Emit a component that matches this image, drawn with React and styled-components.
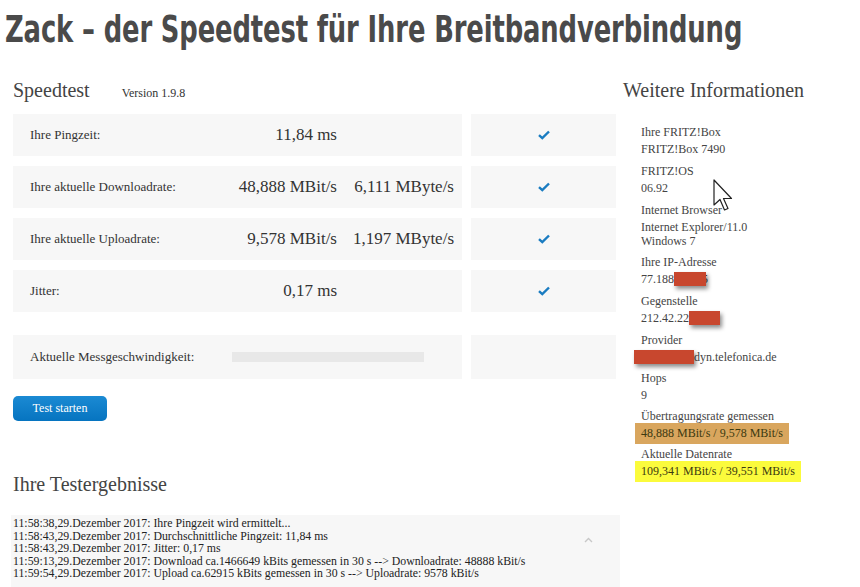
import React from 'react';
import styled, { createGlobalStyle } from 'styled-components';

const Global = createGlobalStyle`
  html, body {
    margin: 0;
    padding: 0;
    background: #ffffff;
  }
  body {
    font-family: "Liberation Serif", "Times New Roman", serif;
    color: #444;
  }
`;

const Page = styled.div`
  width: 860px;
  height: 587px;
  overflow: hidden;
  position: relative;
`;

const Title = styled.h1`
  margin: 0;
  padding: 9px 0 0 5px;
  height: 41px;
  font-family: "DejaVu Sans", "Liberation Sans", sans-serif;
  font-weight: bold;
  font-size: 38px;
  line-height: 41px;
  color: #4a4a4a;
  white-space: nowrap;
`;

const TitleText = styled.span`
  display: inline-block;
  transform: scaleX(0.68);
  transform-origin: left center;
  letter-spacing: -0.2px;
`;

const Main = styled.div`
  display: flex;
  align-items: flex-start;
  padding-left: 13px;
  margin-top: 28px;
`;

const Left = styled.div`
  width: 603px;
`;

const Right = styled.div`
  position: relative;
  margin-left: 7px;
  flex: 1;
`;

const Heading = styled.h2`
  margin: 0;
  font-weight: normal;
  font-size: 20px;
  line-height: 24px;
  color: #444;
  display: flex;
  align-items: baseline;
  gap: 32px;
`;

const Version = styled.span`
  font-size: 12px;
  color: #333;
`;

const Grid = styled.div`
  display: grid;
  grid-template-columns: 449px 145px;
  column-gap: 9px;
  row-gap: 10px;
  margin-top: 9px;
`;

const Cell = styled.div`
  background: #f7f7f7;
  height: ${(p) => (p.$tall ? 44 : 42)}px;
  display: flex;
  align-items: center;
  justify-content: ${(p) => (p.$center ? 'center' : 'flex-start')};
  margin-top: ${(p) => (p.$gapTop ? 13 : 0)}px;
`;

const RowInner = styled.div`
  display: grid;
  grid-template-columns: 1fr 120px 117px;
  align-items: center;
  width: 100%;
  padding: 0 8px 0 17px;
`;

const MeterInner = styled.div`
  display: flex;
  align-items: center;
  width: 100%;
  padding-left: 17px;
`;

const Label = styled.span`
  font-size: 13px;
  color: #333;
`;

const Value = styled.span`
  font-size: 17px;
  color: #333;
  text-align: right;
  white-space: nowrap;
`;

const Bar = styled.div`
  width: 192px;
  height: 10px;
  background: #e8e8e8;
  margin-left: 38px;
`;

const Button = styled.button`
  margin-top: 17px;
  width: 94px;
  height: 25px;
  border: none;
  border-radius: 5px;
  background: linear-gradient(#1b8ad3, #0674c0);
  color: #fff;
  font-family: "Liberation Serif", serif;
  font-size: 12px;
  padding: 0;
  cursor: pointer;
`;

const Results = styled.h2`
  margin: 51px 0 0;
  font-weight: normal;
  font-size: 20px;
  line-height: 24px;
  color: #444;
`;

const LogBox = styled.div`
  margin: 19px 0 0 -2px;
  width: 609px;
  height: 80px;
  background: #f7f7f7;
  display: flex;
`;

const LogLines = styled.div`
  flex: 1;
  padding: 2px 0 0 2px;
  font-size: 11.8px;
  line-height: 12.5px;
  color: #222;
  white-space: nowrap;
`;

const ScrollCol = styled.div`
  width: 36px;
  padding-top: 14px;
`;

const InfoList = styled.div`
  margin-top: 23px;
  padding-left: 18px;
  font-size: 12px;
  color: #444;
`;

const Group = styled.div`
  margin-bottom: ${(p) => (p.$tight ? 7 : 8)}px;
`;

const InfoLabel = styled.div`
  line-height: 14px;
  margin-bottom: 3px;
`;

const InfoValue = styled.div`
  line-height: 14px;
  height: 14px;
  white-space: nowrap;
`;

const Mark = styled.span`
  margin-left: -6px;
  padding: 3px 6px 4px;
  background: ${(p) => p.$color};
  color: #3c3a10;
`;

const Redact = styled.span`
  display: inline-block;
  width: ${(p) => p.$w}px;
  height: 14px;
  vertical-align: -3px;
  background: #c8472e;
  box-shadow: 2px 3px 4px rgba(0, 0, 0, 0.45);
  margin-left: ${(p) => p.$ml || 0}px;
  margin-right: ${(p) => p.$mr || 0}px;
  position: relative;
`;

const Cursor = styled.svg`
  position: absolute;
  left: 90px;
  top: 101px;
`;

const Check = () => (
  <svg width="12" height="10" viewBox="0 0 12 10">
    <path d="M1 5.2 L4.3 8.2 L11 1.5" fill="none" stroke="#1a7cc1" strokeWidth="2.4" />
  </svg>
);

const rows = [
  { label: 'Ihre Pingzeit:', v1: '11,84 ms' },
  { label: 'Ihre aktuelle Downloadrate:', v1: '48,888 MBit/s', v2: '6,111 MByte/s' },
  { label: 'Ihre aktuelle Uploadrate:', v1: '9,578 MBit/s', v2: '1,197 MByte/s' },
  { label: 'Jitter:', v1: '0,17 ms' },
];

const log = [
  '11:58:38,29.Dezember 2017: Ihre Pingzeit wird ermittelt...',
  '11:58:43,29.Dezember 2017: Durchschnittliche Pingzeit: 11,84 ms',
  '11:58:43,29.Dezember 2017: Jitter: 0,17 ms',
  '11:59:13,29.Dezember 2017: Download ca.1466649 kBits gemessen in 30 s --> Downloadrate: 48888 kBit/s',
  '11:59:54,29.Dezember 2017: Upload ca.62915 kBits gemessen in 30 s --> Uploadrate: 9578 kBit/s',
];

export default function App() {
  return (
    <Page>
      <Global />
      <Title>
        <TitleText>Zack – der Speedtest für Ihre Breitbandverbindung</TitleText>
      </Title>
      <Main>
        <Left>
          <Heading>
            Speedtest <Version>Version 1.9.8</Version>
          </Heading>
          <Grid>
            {rows.map((r) => (
              <React.Fragment key={r.label}>
                <Cell>
                  <RowInner>
                    <Label>{r.label}</Label>
                    <Value>{r.v1}</Value>
                    <Value>{r.v2 || ''}</Value>
                  </RowInner>
                </Cell>
                <Cell $center>
                  <Check />
                </Cell>
              </React.Fragment>
            ))}
            <Cell $tall $gapTop>
              <MeterInner>
                <Label>Aktuelle Messgeschwindigkeit:</Label>
                <Bar />
              </MeterInner>
            </Cell>
            <Cell $tall $gapTop />
          </Grid>
          <Button>Test starten</Button>
          <Results>Ihre Testergebnisse</Results>
          <LogBox>
            <LogLines>
              {log.map((l) => (
                <div key={l}>{l}</div>
              ))}
            </LogLines>
            <ScrollCol>
              <svg width="9" height="6" viewBox="0 0 9 6">
                <path d="M1 5 L4.5 1.5 L8 5" fill="none" stroke="#c8c8c8" strokeWidth="1.4" />
              </svg>
            </ScrollCol>
          </LogBox>
        </Left>
        <Right>
          <Heading>Weitere Informationen</Heading>
          <InfoList>
            <Group>
              <InfoLabel>Ihre FRITZ!Box</InfoLabel>
              <InfoValue>FRITZ!Box 7490</InfoValue>
            </Group>
            <Group>
              <InfoLabel>FRITZ!OS</InfoLabel>
              <InfoValue>06.92</InfoValue>
            </Group>
            <Group $tight>
              <InfoLabel>Internet Browser</InfoLabel>
              <InfoValue>Internet Explorer/11.0</InfoValue>
              <InfoValue>Windows 7</InfoValue>
            </Group>
            <Group>
              <InfoLabel>Ihre IP-Adresse</InfoLabel>
              <InfoValue>
                77.188<Redact $w={32} $mr={-4} />5
              </InfoValue>
            </Group>
            <Group>
              <InfoLabel>Gegenstelle</InfoLabel>
              <InfoValue>
                212.42.22<Redact $w={31} />
              </InfoValue>
            </Group>
            <Group $tight>
              <InfoLabel>Provider</InfoLabel>
              <InfoValue>
                <Redact $w={60} $ml={-7} />dyn.telefonica.de
              </InfoValue>
            </Group>
            <Group $tight>
              <InfoLabel>Hops</InfoLabel>
              <InfoValue>9</InfoValue>
            </Group>
            <Group $tight>
              <InfoLabel>Übertragungsrate gemessen</InfoLabel>
              <InfoValue>
                <Mark $color="#d9a65e">48,888 MBit/s / 9,578 MBit/s</Mark>
              </InfoValue>
            </Group>
            <Group>
              <InfoLabel>Aktuelle Datenrate</InfoLabel>
              <InfoValue>
                <Mark $color="#fbfb3c">109,341 MBit/s / 39,551 MBit/s</Mark>
              </InfoValue>
            </Group>
          </InfoList>
          <Cursor width="22" height="34" viewBox="0 0 22 34">
            <path
              d="M1 1 L1 26 L7 20.5 L11.5 31 L15 29.5 L10.5 19.5 L18.5 19.5 Z"
              fill="#fff"
              stroke="#222"
              strokeWidth="1.2"
              strokeLinejoin="round"
            />
          </Cursor>
        </Right>
      </Main>
    </Page>
  );
}
